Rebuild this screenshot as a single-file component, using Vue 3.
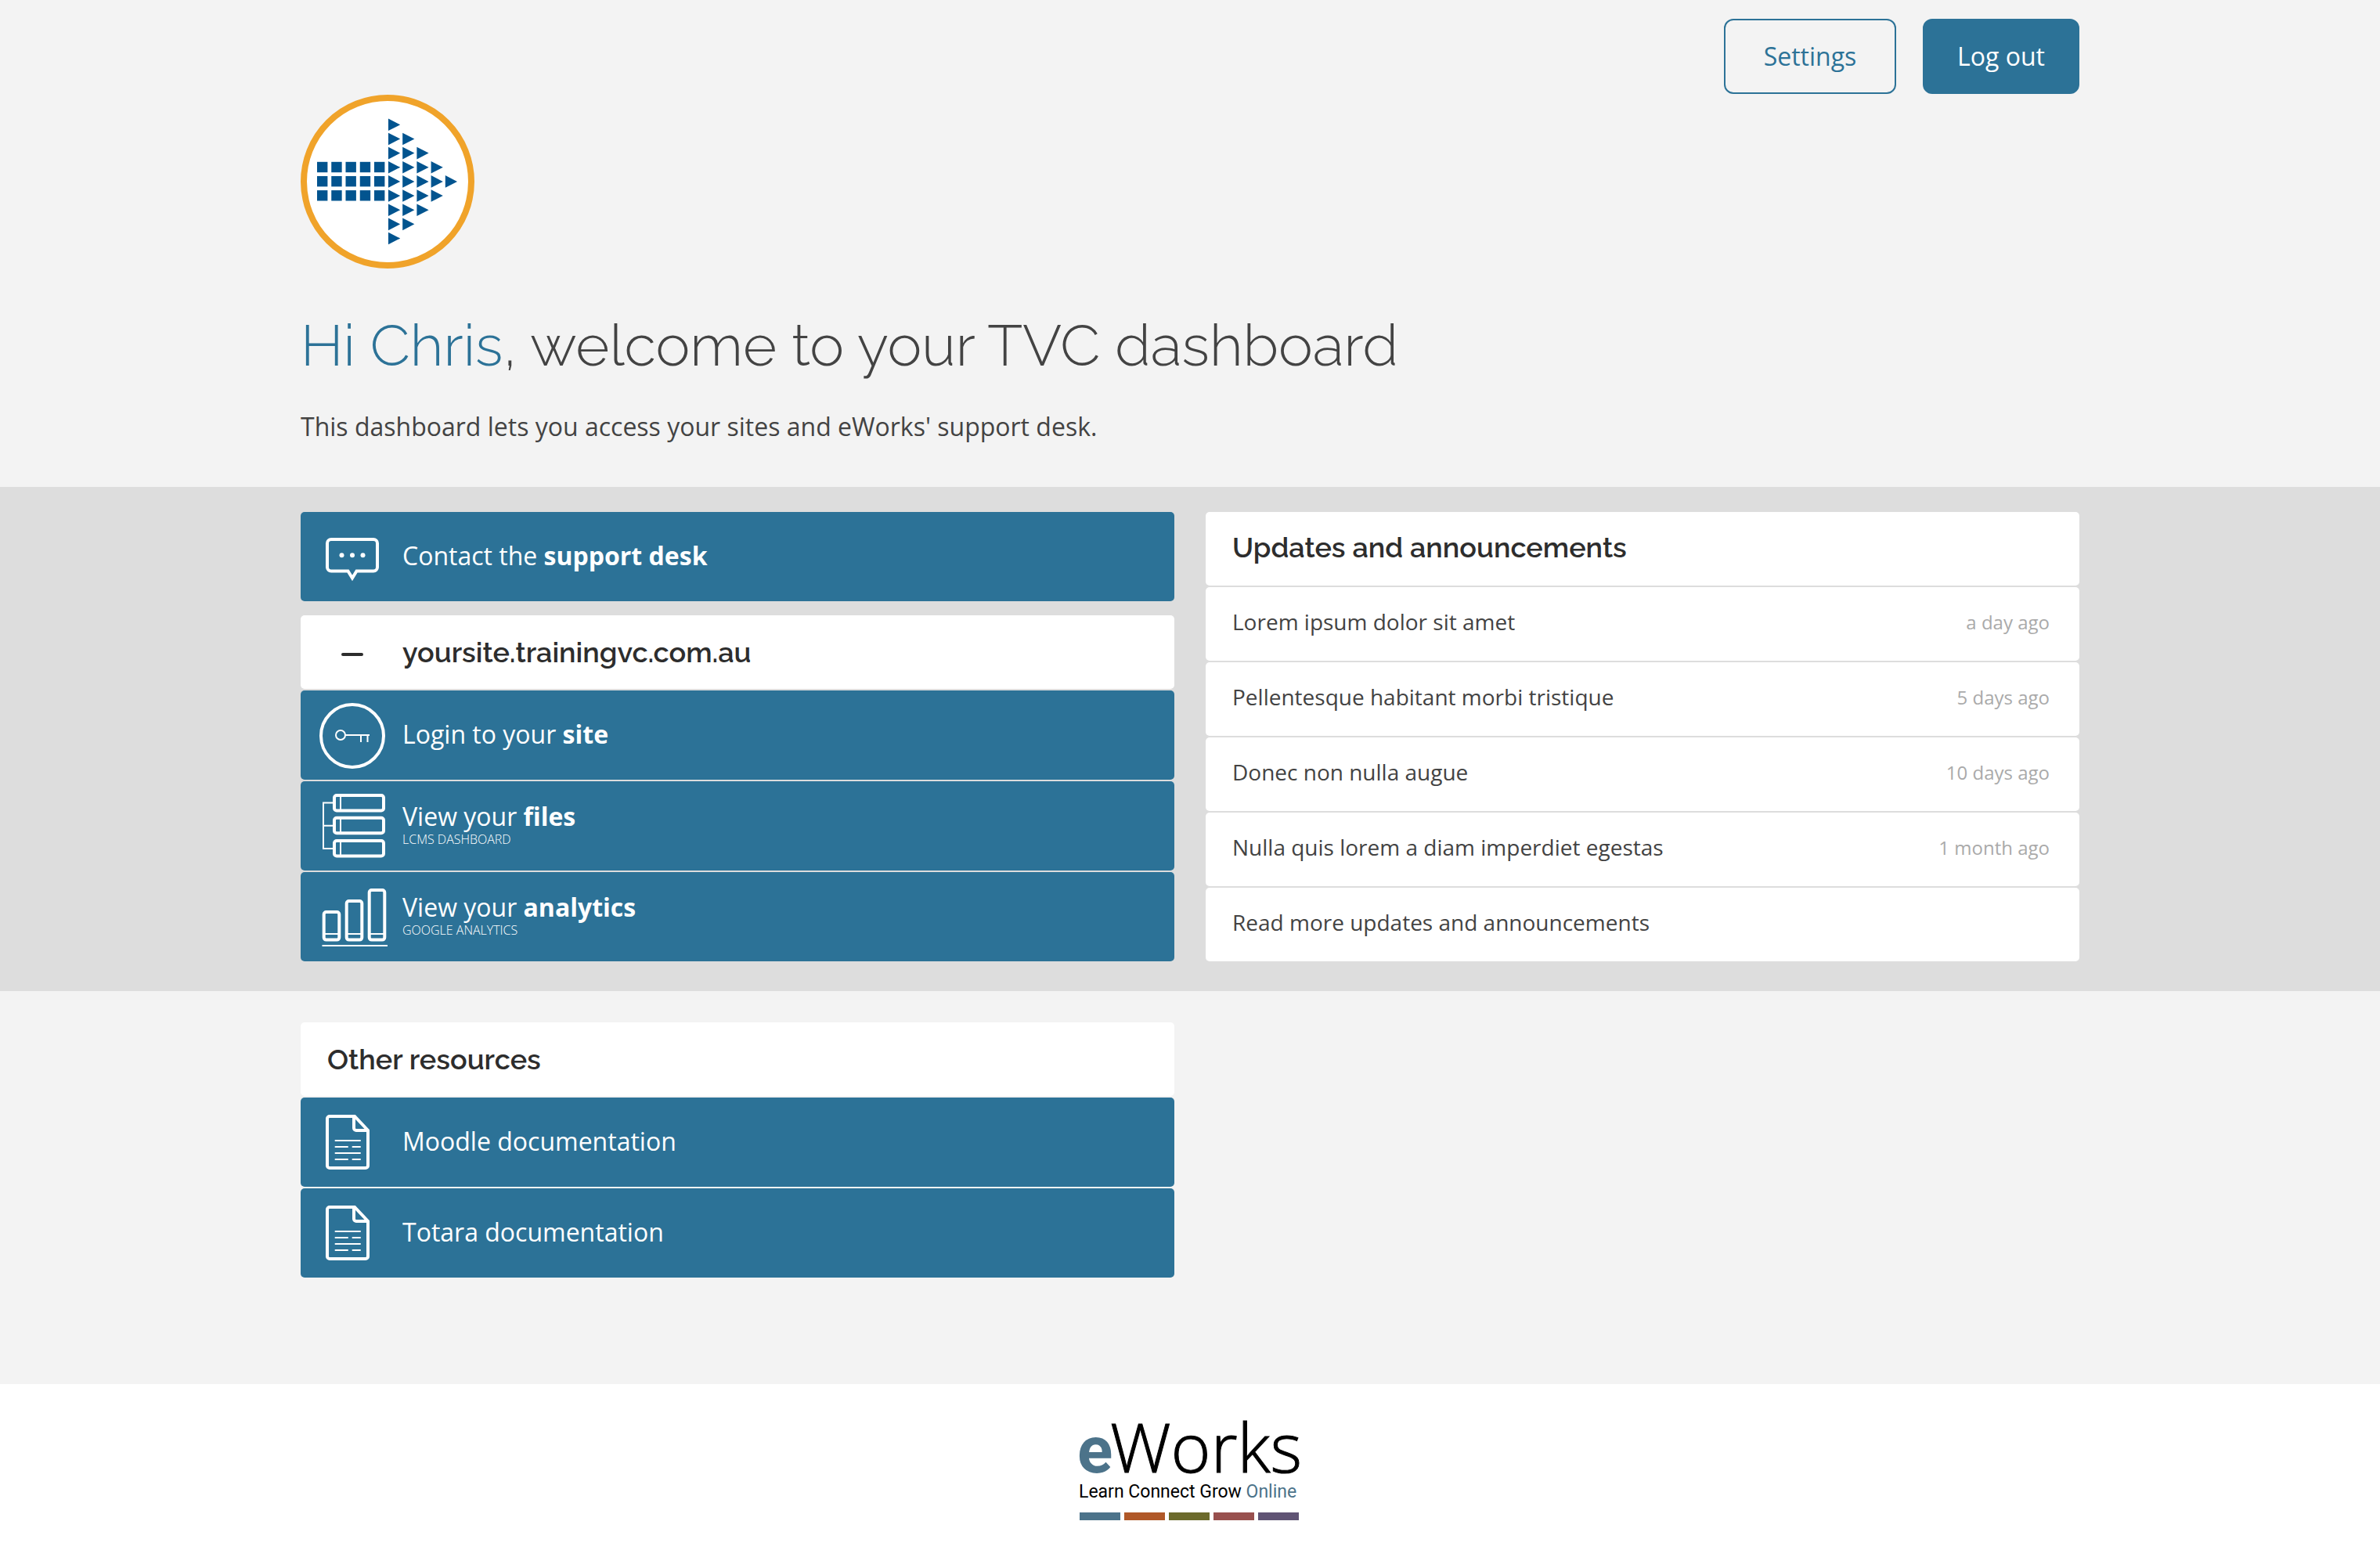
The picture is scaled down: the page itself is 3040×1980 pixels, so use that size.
<script setup>
const updates = [
  { title: 'Lorem ipsum dolor sit amet', age: 'a day ago' },
  { title: 'Pellentesque habitant morbi tristique', age: '5 days ago' },
  { title: 'Donec non nulla augue', age: '10 days ago' },
  { title: 'Nulla quis lorem a diam imperdiet egestas', age: '1 month ago' },
  { title: 'Read more updates and announcements', age: '' },
]

const resources = ['Moodle documentation', 'Totara documentation']

const squares = []
for (let row = 0; row < 3; row++) {
  for (let col = 0; col < 5; col++) {
    squares.push({ x: 21 + col * 18.25, y: 85.8 + row * 18.15 })
  }
}

const arrows = []
for (let row = 0; row < 9; row++) {
  const count = 5 - Math.abs(row - 4)
  for (let col = 0; col < count; col++) {
    const x = 112 + col * 18.2
    const y = 30.5 + row * 18.15
    arrows.push(`M${x} ${y}v15.6l15.2 -7.8z`)
  }
}

const palette = ['#4c738a', '#b05828', '#6c6a2c', '#98504e', '#605474']
</script>

<template>
  <div class="page">
    <header class="container intro">
      <nav class="actions" aria-label="Account">
        <button type="button" class="btn outline">Settings</button>
        <button type="button" class="btn solid">Log out</button>
      </nav>

      <svg class="brand" width="222" height="222" viewBox="0 0 222 222" role="img" aria-label="TVC">
        <circle cx="111" cy="111" r="107" fill="#fff" stroke="#f0a32a" stroke-width="8" />
        <g fill="#02548f">
          <rect v-for="(s, i) in squares" :key="i" :x="s.x" :y="s.y" width="13.4" height="13.4" />
          <path :d="arrows.join('')" />
        </g>
      </svg>

      <h1><span class="name">Hi Chris</span>, welcome to your TVC dashboard</h1>
      <p class="lead">This dashboard lets you access your sites and eWorks' support desk.</p>
    </header>

    <section class="band">
      <div class="container columns">
        <div class="column">
          <a href="#support" class="tile support">
            <svg class="icon" width="130" height="114" viewBox="0 0 130 114" aria-hidden="true">
              <path d="M39 35H93a5 5 0 0 1 5 5V70.500a5 5 0 0 1 -5 5H71.500L66 84.500L60.500 75.500H39a5 5 0 0 1 -5 -5V40a5 5 0 0 1 5 -5z" class="thick" />
              <circle cx="52.500" cy="55.300" r="3" fill="#fff" />
              <circle cx="66" cy="55.300" r="3" fill="#fff" />
              <circle cx="79.500" cy="55.300" r="3" fill="#fff" />
            </svg>
            <span class="label">Contact the <strong>support desk</strong></span>
          </a>

          <h2 class="panel site">
            <button type="button" class="toggle" aria-expanded="true">
              <svg class="icon" width="130" height="94" viewBox="0 0 130 94" aria-hidden="true">
                <path d="M54 50H78" stroke="#2d2d2d" stroke-width="4" stroke-linecap="round" />
              </svg>
              yoursite.trainingvc.com.au
            </button>
          </h2>

          <a href="#login" class="tile">
            <svg class="icon" width="130" height="114" viewBox="0 0 130 114" aria-hidden="true">
              <circle cx="66" cy="58" r="40" class="thick" />
              <circle cx="51" cy="57" r="6" class="thin" />
              <path d="M57 57H88M77 57V66M85.500 57V66" class="thin" />
            </svg>
            <span class="label">Login to your <strong>site</strong></span>
          </a>

          <a href="#files" class="tile">
            <svg class="icon" width="130" height="114" viewBox="0 0 130 114" aria-hidden="true">
              <rect x="43" y="18" width="63" height="19.500" rx="3" class="thick" />
              <rect x="43" y="46.800" width="63" height="19.500" rx="3" class="thick" />
              <rect x="43" y="76" width="63" height="19.500" rx="3" class="thick" />
              <path d="M51 18V37M51 47V66M51 76V95M41 27.500H29V86H41M29 56.700H41" class="thin" />
            </svg>
            <span class="label">View your <strong>files</strong><small>LCMS DASHBOARD</small></span>
          </a>

          <a href="#analytics" class="tile">
            <svg class="icon" width="130" height="114" viewBox="0 0 130 114" aria-hidden="true">
              <rect x="29.700" y="51" width="19.600" height="35.600" rx="3" class="thick" />
              <rect x="58.700" y="37" width="19.600" height="49.600" rx="3" class="thick" />
              <rect x="87.700" y="23" width="19.600" height="63.600" rx="3" class="thick" />
              <path d="M30 79H49M59 79H78M88 79H107M27.500 94H111" class="thin" />
            </svg>
            <span class="label">View your <strong>analytics</strong><small>GOOGLE ANALYTICS</small></span>
          </a>
        </div>

        <div class="column">
          <h2 class="panel news">Updates and announcements</h2>
          <a v-for="item in updates" :key="item.title" href="#updates" class="panel update">
            <span>{{ item.title }}</span>
            <span v-if="item.age" class="age">{{ item.age }}</span>
          </a>
        </div>
      </div>
    </section>

    <section class="container columns resources">
      <div class="column">
        <h2 class="panel other">Other resources</h2>
        <a v-for="name in resources" :key="name" href="#docs" class="tile">
          <svg class="icon" width="130" height="114" viewBox="0 0 130 114" aria-hidden="true">
            <path d="M37 24H69L86 42V87a3 3 0 0 1 -3 3H37a3 3 0 0 1 -3 -3V27a3 3 0 0 1 3 -3z" class="thick" />
            <path d="M68 24V39a3 3 0 0 0 3 3H86" class="thick" />
            <path d="M44.500 55H76M44.500 63H60M66.500 63H76M44.500 71H76M44.500 79H60M66.500 79H76" class="thin" stroke-linecap="round" />
          </svg>
          <span class="label">{{ name }}</span>
        </a>
      </div>
      <div class="column"></div>
    </section>

    <footer class="footer">
      <svg width="282" height="132" viewBox="0 0 282 132" role="img" aria-label="eWorks, Learn Connect Grow Online">
        <text x="-3" y="69" class="logo-e">e</text>
        <text x="39" y="69" class="logo-works">Works</text>
        <text x="-1" y="101" class="tagline">Learn Connect Grow <tspan fill="#4c738a">Online</tspan></text>
        <rect v-for="(c, i) in palette" :key="c" :x="i * 57" y="120" width="52" height="10" :fill="c" />
      </svg>
    </footer>
  </div>
</template>

<style>
body {
  background: #fff;
}
</style>

<style scoped>
.page {
  background: #f3f3f3;
  color: #434343;
  font-family: "Open Sans", "Noto Sans", sans-serif;
  font-size: 32px;
}

.container {
  box-sizing: border-box;
  max-width: 2320px;
  margin: 0 auto;
  padding: 0 24px;
}

.intro {
  padding-top: 24px;
  padding-bottom: 53px;
}

.actions {
  display: flex;
  justify-content: flex-end;
  gap: 34px;
}

.btn {
  height: 96px;
  padding: 0 24px 2px;
  border: 2px solid #2c7297;
  border-radius: 12px;
  font: inherit;
  cursor: pointer;
}

.outline {
  min-width: 220px;
  background: transparent;
  color: #2c7297;
}

.solid {
  min-width: 200px;
  background: #2c7297;
  color: #fff;
}

.brand {
  display: block;
  margin-top: 1px;
}

h1 {
  margin: 54px 0 36px;
  font: 300 74px/88px Raleway, "Open Sans", sans-serif;
}

.name {
  color: #2c7297;
}

.lead {
  margin: 0;
  line-height: 48px;
}

.band {
  padding: 32px 0 38px;
  background: #ddd;
}

.columns {
  display: flex;
  align-items: flex-start;
  gap: 40px;
}

.column {
  display: flex;
  flex: 1 1 0;
  flex-direction: column;
  gap: 2px;
  min-width: 0;
}

.tile {
  display: flex;
  align-items: center;
  border-radius: 5px;
  background: #2c7297;
  color: #fff;
  text-decoration: none;
}

.support {
  margin-bottom: 16px;
}

.icon {
  flex: none;
  display: block;
  fill: none;
}

.thick {
  fill: none;
  stroke: #fff;
  stroke-width: 4;
}

.thin {
  fill: none;
  stroke: #fff;
  stroke-width: 2;
}

.label {
  padding-bottom: 2px;
  line-height: 36px;
}

.label small {
  display: block;
  font-size: 16px;
  font-weight: 300;
  line-height: 22px;
}

.panel {
  box-sizing: border-box;
  display: flex;
  align-items: center;
  min-height: 94px;
  margin: 0;
  border-radius: 5px;
  background: #fff;
}

h2.panel {
  color: #2d2d2d;
  font: 600 36px/44px Raleway, "Open Sans", sans-serif;
}

.toggle {
  display: flex;
  flex: 1;
  align-items: center;
  padding: 0;
  border: 0;
  background: none;
  color: inherit;
  font: inherit;
  text-align: left;
  cursor: pointer;
}

.news {
  padding: 0 34px 4px;
}

.other {
  padding: 0 34px;
}

.update {
  justify-content: space-between;
  padding: 0 38px 6px 34px;
  color: #434343;
  font-size: 28px;
  text-decoration: none;
}

.age {
  color: #aaa;
  font-size: 24px;
}

.resources {
  padding-top: 40px;
  padding-bottom: 136px;
}

.footer {
  display: flex;
  justify-content: center;
  padding: 44px 0 36px;
  background: #fff;
}

.footer svg {
  display: block;
  overflow: visible;
}

.logo-e {
  fill: #4c738a;
  font: 700 84px Roboto, sans-serif;
}

.logo-works {
  fill: #000;
  stroke: #000;
  stroke-width: 1;
  font: 300 87px "Open Sans", sans-serif;
}

.tagline {
  fill: #000;
  font: 400 23px Roboto, sans-serif;
}
</style>
